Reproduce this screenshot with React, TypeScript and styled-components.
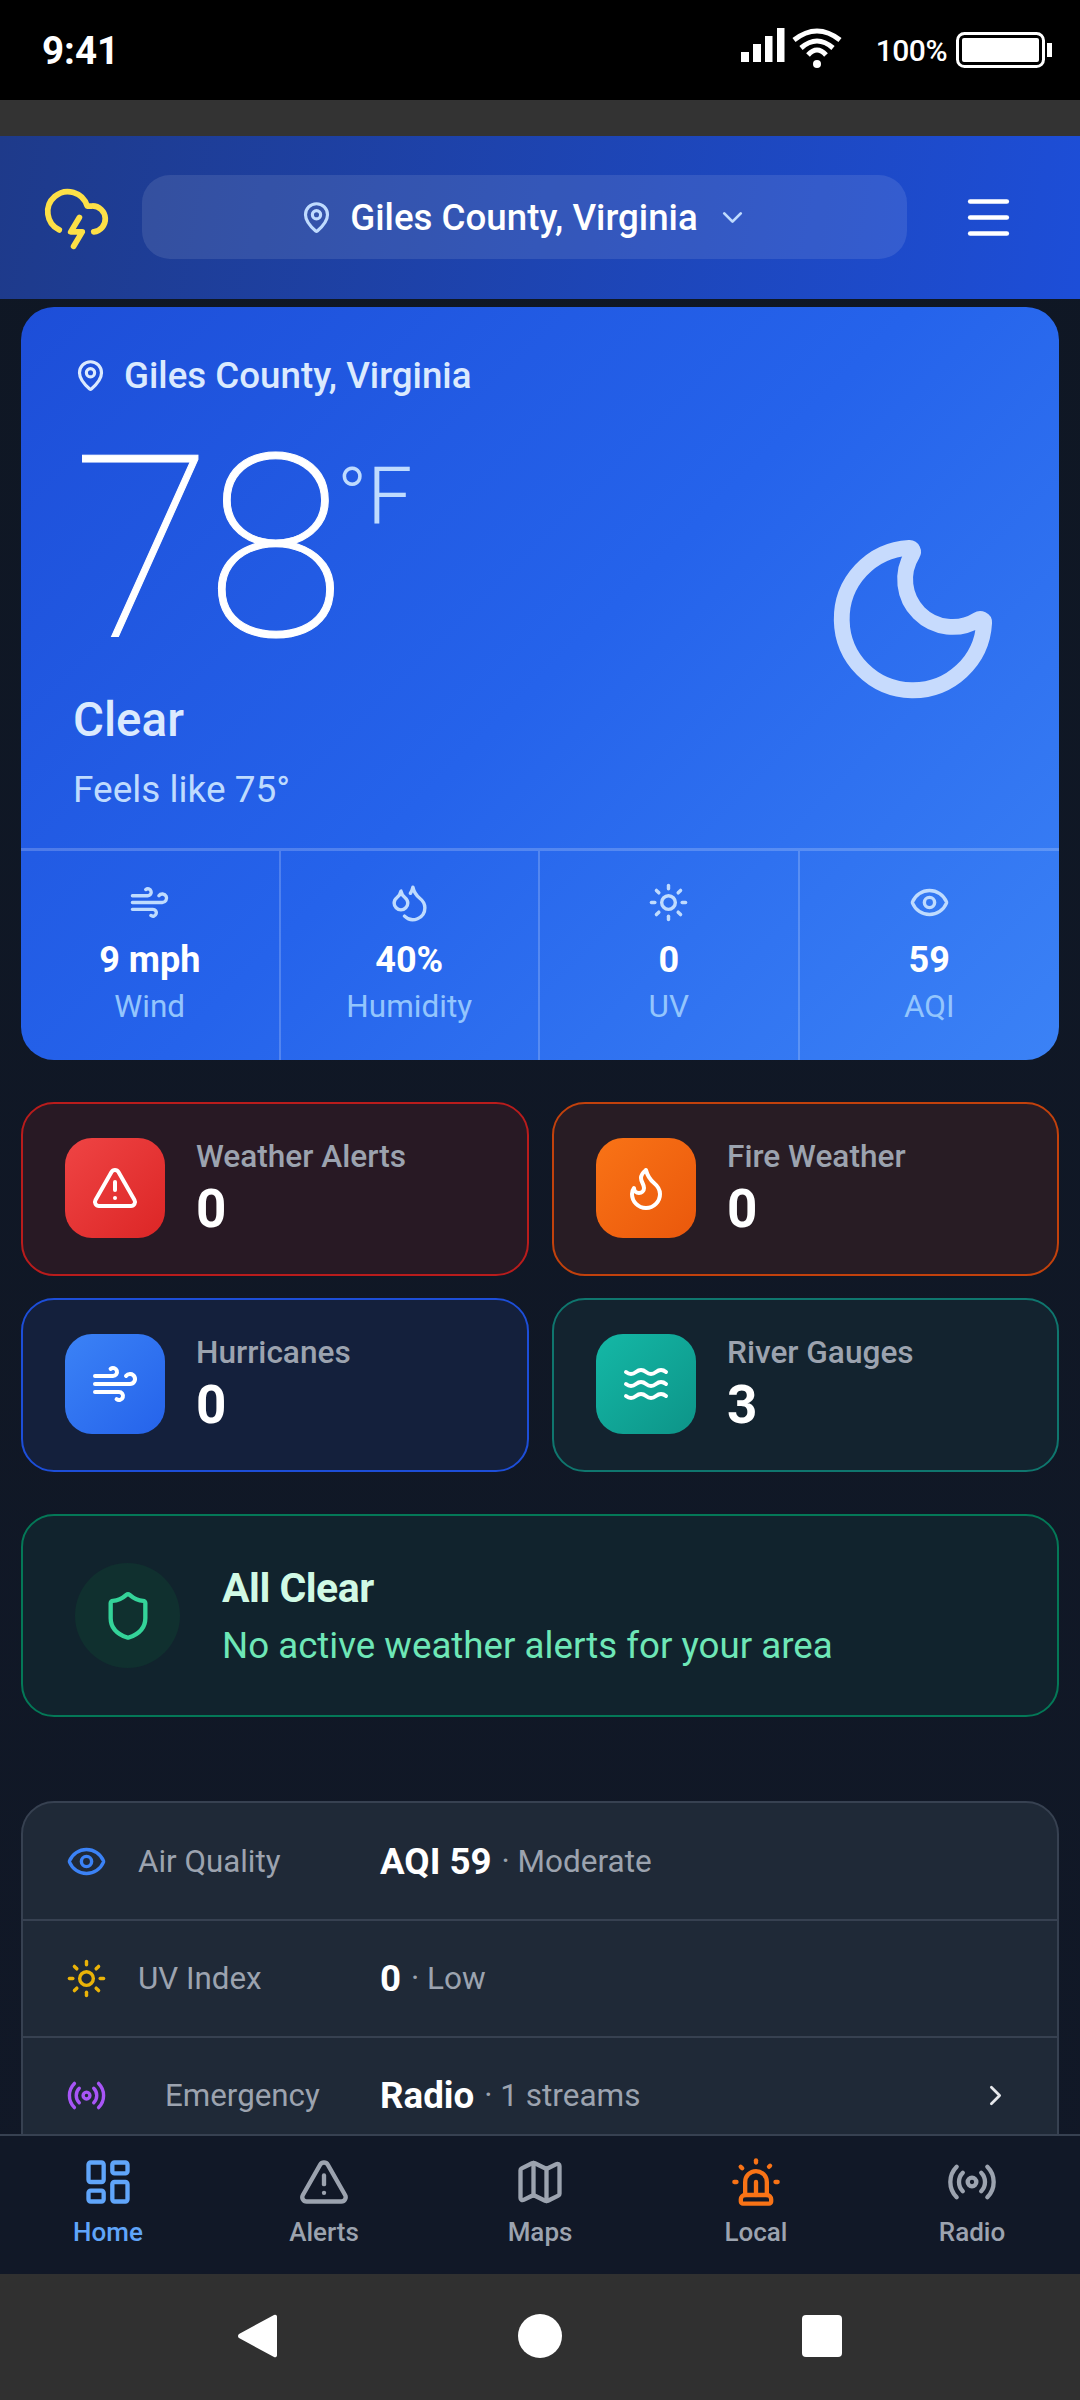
import React from 'react';
import styled, { createGlobalStyle } from 'styled-components';
import {
  CloudLightning, MapPin, ChevronDown, Menu, Moon, Wind, Droplets, Sun, Eye,
  TriangleAlert, Flame, Waves, Shield, Radio, ChevronRight, LayoutDashboard, Map as MapIcon, Siren,
} from 'lucide-react';

const Global = createGlobalStyle`
  html, body { margin: 0; padding: 0; background: #101726; }
  * { box-sizing: border-box; }
  body { font-family: Roboto, "Liberation Sans", sans-serif; }
`;

const Screen = styled.div`
  width: 1080px; height: 2400px; display: flex; flex-direction: column; overflow: hidden;
  background: linear-gradient(180deg, #0f1724 0%, #111827 100%);
`;
const StatusBar = styled.div`
  height: 100px; flex: none; background: #000; color: #fff; display: flex; align-items: center;
  padding: 0 28px 0 42px; font-family: Roboto, sans-serif;
`;
const Time = styled.span`font-size: 38.5px; font-weight: 700; letter-spacing: 0;`;
const StatusRight = styled.div`margin-left: auto; display: flex; align-items: center;`;
const Pct = styled.span`font-size: 30px; font-weight: 500; margin: 0 9px 0 34px; letter-spacing: -0.5px;`;
const GreyGap = styled.div`height: 36px; flex: none; background: #333;`;

const Header = styled.header`
  height: 163px; flex: none; display: flex; align-items: center; padding: 0 64px 0 42px;
  background: linear-gradient(100deg, #1e3a8a 0%, #1d4ed8 100%);
  color: #fff;
`;
const Selector = styled.div`
  width: 765px; height: 84px; margin: 0 0 1px 31px; border-radius: 28px; background: rgba(255,255,255,.1);
  display: flex; align-items: center; justify-content: center; font-size: 36.7px; font-weight: 500;
`;
const PinWrap = styled.span`display: flex; color: #bfdbfe; margin-right: 17px;`;
const ChevWrap = styled.span`display: flex; color: #bfdbfe; margin-left: 18px;`;
const MenuWrap = styled.span`display: flex; margin-left: auto;`;

const Main = styled.main`flex: 1; min-height: 0; overflow: hidden; padding: 8px 21px 0;`;

const Hero = styled.section`
  height: 753px; border-radius: 33px; overflow: hidden; display: flex; flex-direction: column;
  background: linear-gradient(135deg, #1d4ed8 0%, #2563eb 50%, #3b82f6 100%);
  color: #fff;
`;
const HeroBody = styled.div`
  height: 541px; flex: none; padding: 46px 52px 0; position: relative; display: flex; flex-direction: column;
`;
const HeroLoc = styled.div`display: flex; align-items: center; gap: 17px; color: #dbeafe; font-size: 36.7px; font-weight: 500; height: 44px; padding-left: 1px;`;
const TempRow = styled.div`display: flex; align-items: flex-start; margin-top: 42px; height: 220px;`;
const TempNum = styled.span`font-size: 254px; font-weight: 100; line-height: 220px; letter-spacing: -6px; -webkit-text-stroke: 1px #fff;`;
const TempUnit = styled.span`font-size: 80px; font-weight: 300; color: #bfdbfe; line-height: 96px; margin: 10px 0 0 -2px;`;
const Cond = styled.div`font-size: 47.5px; font-weight: 500; color: #dbeafe; margin-top: 33px; line-height: 56px;`;
const Feels = styled.div`font-size: 37px; color: #bfdbfe; margin-top: 21px; line-height: 42px;`;
const MoonWrap = styled.span`position: absolute; right: 51px; top: 217px; display: flex; color: #c7dbfd;`;

const Stats = styled.div`
  flex: 1; display: grid; grid-template-columns: repeat(4, 1fr); border-top: 3px solid rgba(255,255,255,.2);
`;
const Stat = styled.div`
  display: flex; flex-direction: column; align-items: center; padding-top: 31px;
  border-right: ${p => (p.$last ? 'none' : '2px solid rgba(255,255,255,.2)')};
  color: #bfdbfe;
`;
const StatValue = styled.div`font-size: 36px; font-weight: 700; color: #fff; margin-top: 15px; line-height: 44px;`;
const StatLabel = styled.div`font-size: 31.5px; color: #93c5fd; margin-top: 6px; line-height: 38px;`;

const Tiles = styled.div`display: grid; grid-template-columns: 508px 507px; gap: 22px 23px; margin-top: 42px;`;
const Tile = styled.div`
  height: 174px; border-radius: 33px; border: 2.75px solid ${p => p.$border}; background: ${p => p.$bg};
  display: flex; align-items: center; padding: 0 0 2px 42px; gap: 31px;
`;
const TileIcon = styled.div`
  width: 100px; height: 100px; border-radius: 27px; flex: none; display: flex; align-items: center; justify-content: center;
  color: #fff; background: linear-gradient(135deg, ${p => p.$from}, ${p => p.$to});
`;
const TileText = styled.div`display: flex; flex-direction: column; padding-top: 2px;`;
const TileLabel = styled.div`font-size: 31.6px; font-weight: 500; color: #9ca3af; line-height: 36px;`;
const TileValue = styled.div`font-size: 53px; font-weight: 700; color: #fff; line-height: 62px; margin-top: 3px;`;

const ClearCard = styled.div`
  height: 203px; margin-top: 42px; border-radius: 33px; border: 2.75px solid #047857; background: #11232d;
  display: flex; align-items: center; padding: 0 0 0 52px; gap: 42px;
`;
const ClearCircle = styled.div`
  width: 105px; height: 105px; border-radius: 50%; background: #10302f; color: #34d399;
  display: flex; align-items: center; justify-content: center; flex: none;
`;
const ClearTitle = styled.div`font-size: 41px; font-weight: 700; color: #d1fae5; line-height: 50px; letter-spacing: -0.5px;`;
const ClearSub = styled.div`font-size: 36.7px; color: #6ee7b7; line-height: 44px; margin-top: 11px;`;

const InfoCard = styled.div`
  margin-top: 84px; border-radius: 33px 33px 0 0; border: 2.75px solid #374151; background: #1f2937;
`;
const InfoRow = styled.div`
  height: ${p => (p.$first ? '116px' : '117px')}; display: flex; align-items: center; padding: 0 43px;
  border-top: ${p => (p.$first ? 'none' : '2.75px solid #374151')};
`;
const InfoIcon = styled.span`display: flex; width: 41px; color: ${p => p.$color}; flex: none;`;
const InfoLabel = styled.span`font-size: 31.3px; color: #9ca3af; width: 242px; flex: none; margin-left: 31px; padding-left: ${p => p.$indent || 0}px;`;
const InfoValue = styled.span`font-size: 36.7px; font-weight: 700; color: #fff;`;
const InfoSub = styled.span`font-size: 31.5px; color: #9ca3af; margin-left: 10px;`;
const InfoChev = styled.span`display: flex; margin-left: auto; color: #e5e7eb; margin-right: 2px;`;

const BottomNav = styled.nav`
  height: 140px; flex: none; background: #111827; border-top: 2.75px solid #374151;
  display: grid; grid-template-columns: repeat(5, 1fr);
`;
const NavItem = styled.div`
  display: flex; flex-direction: column; align-items: center; padding-top: 20px;
  color: ${p => p.$color};
`;
const NavLabel = styled.span`font-size: 26px; font-weight: 500; color: ${p => p.$color}; margin-top: 8px; line-height: 32px;`;

const AndroidNav = styled.div`
  height: 126px; flex: none; background: #303030; display: flex; align-items: center; justify-content: center; gap: 0;
  color: #fff; padding-bottom: 2px;
`;
const NavSlot = styled.span`width: 282px; display: flex; justify-content: center;`;

const WHITE = '#fff';

export default function App() {
  const sw = 2;
  return (
    <Screen>
      <Global />
      <StatusBar>
        <Time>9:41</Time>
        <StatusRight>
          <svg width="110" height="44" viewBox="0 0 110 44" fill="#fff">
            <rect x="9" y="24" width="8" height="10" />
            <rect x="21" y="16" width="8" height="18" />
            <rect x="33" y="8" width="7.5" height="26" />
            <rect x="45" y="0" width="7.5" height="34" />
            <g fill="none" stroke="#fff" strokeWidth="5">
              <path d="M62 12 Q85 -6 108 12" />
              <path d="M69 20 Q85 6 101 20" />
              <path d="M76 27 Q85 17 94 27" />
            </g>
            <circle cx="85" cy="36" r="4" />
          </svg>
          <Pct>100%</Pct>
          <svg width="96" height="36" viewBox="0 0 96 36">
            <rect x="1.5" y="1.5" width="86" height="33" rx="7" fill="none" stroke="#fff" strokeWidth="3" />
            <rect x="6" y="6" width="77" height="24" rx="2" fill="#fff" />
            <rect x="91" y="11" width="5" height="14" fill="#fff" />
          </svg>
        </StatusRight>
      </StatusBar>
      <GreyGap />
      <Header>
        <CloudLightning size={69} color="#fde047" strokeWidth={sw} />
        <Selector>
          <PinWrap><MapPin size={33} strokeWidth={2.3} /></PinWrap>
          Giles County, Virginia
          <ChevWrap><ChevronDown size={33} strokeWidth={sw} /></ChevWrap>
        </Selector>
        <MenuWrap><Menu size={55} strokeWidth={sw} /></MenuWrap>
      </Header>
      <Main>
        <Hero>
          <HeroBody>
            <HeroLoc><MapPin size={33} strokeWidth={2.3} />Giles County, Virginia</HeroLoc>
            <TempRow>
              <TempNum>78</TempNum>
              <TempUnit>°F</TempUnit>
            </TempRow>
            <Cond>Clear</Cond>
            <Feels>Feels like 75°</Feels>
            <MoonWrap><Moon size={190} strokeWidth={2} /></MoonWrap>
          </HeroBody>
          <Stats>
            <Stat><Wind size={41} strokeWidth={sw} /><StatValue>9 mph</StatValue><StatLabel>Wind</StatLabel></Stat>
            <Stat><Droplets size={41} strokeWidth={sw} /><StatValue>40%</StatValue><StatLabel>Humidity</StatLabel></Stat>
            <Stat><Sun size={41} strokeWidth={sw} /><StatValue>0</StatValue><StatLabel>UV</StatLabel></Stat>
            <Stat $last><Eye size={41} strokeWidth={sw} /><StatValue>59</StatValue><StatLabel>AQI</StatLabel></Stat>
          </Stats>
        </Hero>
        <Tiles>
          <Tile $border="#b91c1c" $bg="#281924">
            <TileIcon $from="#ef4444" $to="#dc2626"><TriangleAlert size={48} strokeWidth={sw} /></TileIcon>
            <TileText><TileLabel>Weather Alerts</TileLabel><TileValue>0</TileValue></TileText>
          </Tile>
          <Tile $border="#c2410c" $bg="#281c24">
            <TileIcon $from="#f97316" $to="#ea580c"><Flame size={48} strokeWidth={sw} /></TileIcon>
            <TileText><TileLabel>Fire Weather</TileLabel><TileValue>0</TileValue></TileText>
          </Tile>
          <Tile $border="#1d4ed8" $bg="#14203c">
            <TileIcon $from="#3b82f6" $to="#2563eb"><Wind size={48} strokeWidth={sw} /></TileIcon>
            <TileText><TileLabel>Hurricanes</TileLabel><TileValue>0</TileValue></TileText>
          </Tile>
          <Tile $border="#0f766e" $bg="#13232f">
            <TileIcon $from="#14b8a6" $to="#0d9488"><Waves size={48} strokeWidth={sw} /></TileIcon>
            <TileText><TileLabel>River Gauges</TileLabel><TileValue>3</TileValue></TileText>
          </Tile>
        </Tiles>
        <ClearCard>
          <ClearCircle><Shield size={52} strokeWidth={sw} /></ClearCircle>
          <div>
            <ClearTitle>All Clear</ClearTitle>
            <ClearSub>No active weather alerts for your area</ClearSub>
          </div>
        </ClearCard>
        <InfoCard>
          <InfoRow $first>
            <InfoIcon $color="#3b82f6"><Eye size={41} strokeWidth={sw} /></InfoIcon>
            <InfoLabel>Air Quality</InfoLabel>
            <InfoValue>AQI 59</InfoValue><InfoSub>· Moderate</InfoSub>
          </InfoRow>
          <InfoRow>
            <InfoIcon $color="#eab308"><Sun size={41} strokeWidth={sw} /></InfoIcon>
            <InfoLabel>UV Index</InfoLabel>
            <InfoValue>0</InfoValue><InfoSub>· Low</InfoSub>
          </InfoRow>
          <InfoRow>
            <InfoIcon $color="#a855f7"><Radio size={41} strokeWidth={sw} /></InfoIcon>
            <InfoLabel $indent={27}>Emergency</InfoLabel>
            <InfoValue>Radio</InfoValue><InfoSub>· 1 streams</InfoSub>
            <InfoChev><ChevronRight size={33} strokeWidth={sw} /></InfoChev>
          </InfoRow>
        </InfoCard>
      </Main>
      <BottomNav>
        <NavItem $color="#60a5fa"><LayoutDashboard size={52} strokeWidth={sw} /><NavLabel $color="#60a5fa">Home</NavLabel></NavItem>
        <NavItem $color="#9ca3af"><TriangleAlert size={52} strokeWidth={sw} /><NavLabel $color="#9ca3af">Alerts</NavLabel></NavItem>
        <NavItem $color="#9ca3af"><MapIcon size={52} strokeWidth={sw} /><NavLabel $color="#9ca3af">Maps</NavLabel></NavItem>
        <NavItem $color="#f97316"><Siren size={52} strokeWidth={sw} /><NavLabel $color="#9ca3af">Local</NavLabel></NavItem>
        <NavItem $color="#9ca3af"><Radio size={52} strokeWidth={sw} /><NavLabel $color="#9ca3af">Radio</NavLabel></NavItem>
      </BottomNav>
      <AndroidNav>
        <NavSlot>
          <svg width="44" height="46" viewBox="0 0 44 46"><path d="M38 2 a2 2 0 0 1 3 2 v38 a2 2 0 0 1 -3 2 L3 25 a2.5 2.5 0 0 1 0 -4z" fill={WHITE} /></svg>
        </NavSlot>
        <NavSlot>
          <svg width="44" height="44" viewBox="0 0 44 44"><circle cx="22" cy="22" r="22" fill={WHITE} /></svg>
        </NavSlot>
        <NavSlot>
          <svg width="40" height="42" viewBox="0 0 40 42"><rect width="40" height="42" rx="4" fill={WHITE} /></svg>
        </NavSlot>
      </AndroidNav>
    </Screen>
  );
}
